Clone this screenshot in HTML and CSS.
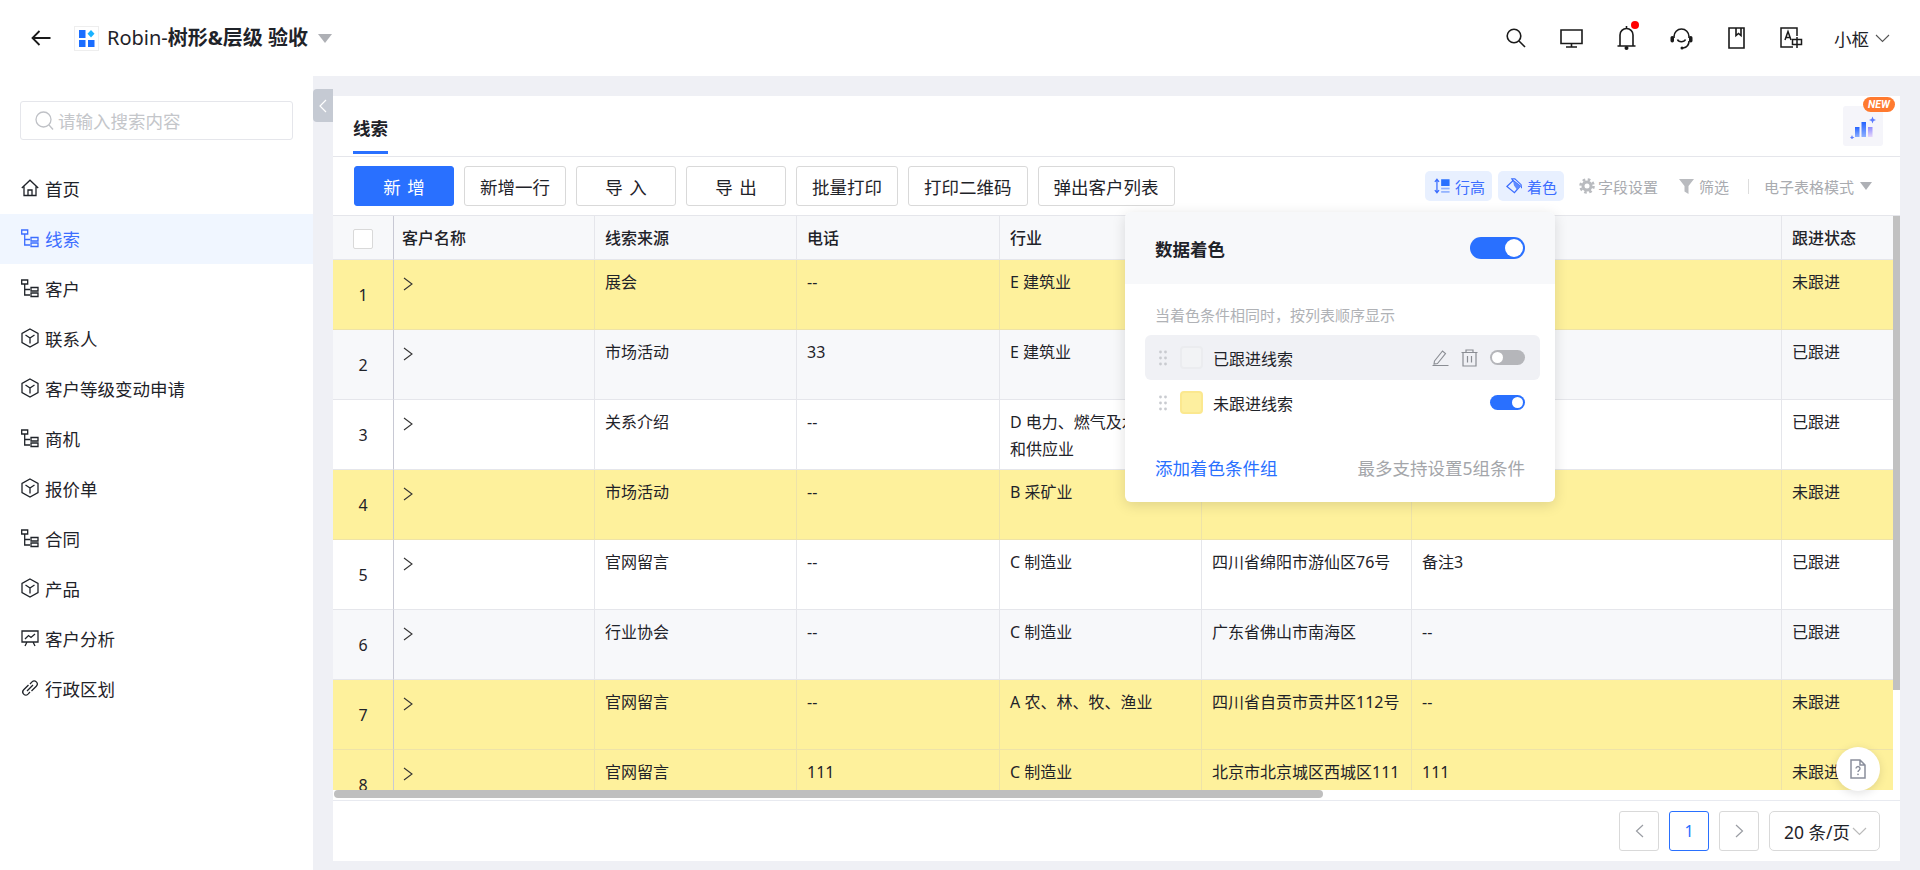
FILE: index.html
```html
<!DOCTYPE html>
<html lang="zh-CN">
<head>
    <meta charset="UTF-8">
    <title>线索</title>
    <link rel="stylesheet" href="styles.css">
</head>
<body>
    <svg class="sprites" width="0" height="0">
        <symbol id="i-tree" viewBox="0 0 18 18">
            <path d="M0.700 1h6v4H0.700zM3.700 5V16H9M3.700 10.500H9M10 8.500h7v3.500h-7zM10 14h7v3.500h-7z" fill="none" stroke="currentColor" stroke-width="1.300"/>
        </symbol>
        <symbol id="i-cube" viewBox="0 0 18 20">
            <path d="M9 1l8 4.500v9L9 19l-8-4.500v-9zM4.500 7L9 10l4.500-3M9 10v5.500" fill="none" stroke="currentColor" stroke-width="1.300"/>
        </symbol>
        <symbol id="i-chev" viewBox="0 0 10 14">
            <path d="M1 1l8 6-8 6" fill="none" stroke="currentColor" stroke-width="1.100"/>
        </symbol>
        <symbol id="i-dots" viewBox="0 0 8 16">
            <circle cx="1.500" cy="2" r="1.400"/><circle cx="6.500" cy="2" r="1.400"/>
            <circle cx="1.500" cy="8" r="1.400"/><circle cx="6.500" cy="8" r="1.400"/>
            <circle cx="1.500" cy="14" r="1.400"/><circle cx="6.500" cy="14" r="1.400"/>
        </symbol>
    </svg>

    <header class="topbar">
        <svg class="back" width="20" height="16" viewBox="0 0 20 16"><path d="M19.500 8H1.500M8.500 1L1.500 8l7 7" fill="none" stroke="#1a1a1a" stroke-width="1.800"/></svg>
        <span class="app-logo">
            <svg width="17" height="17" viewBox="0 0 17 17">
                <rect x="0" y="0" width="6.500" height="8" fill="#1a6dff"/>
                <path d="M12 0l3.500 3.800L12 7.600 8.500 3.800z" fill="#1ab2ff"/>
                <rect x="0" y="10" width="6.500" height="7" fill="#1a6dff"/>
                <rect x="9" y="10" width="6.500" height="7" fill="#1a6dff"/>
            </svg>
        </span>
        <span class="app-title">Robin-<b>树形&amp;层级 验收</b></span>
        <span class="caret caret-lg"></span>

        <div class="top-actions">
            <svg width="20" height="20" viewBox="0 0 20 20"><circle cx="8" cy="8" r="6.800" fill="none" stroke="#1a1a1a" stroke-width="1.600"/><path d="M13 13l6 6" stroke="#1a1a1a" stroke-width="1.600"/></svg>
            <svg width="23" height="19" viewBox="0 0 23 19"><path d="M1 1h21v13.500H1zM11.500 14.500V18M6 18h11" fill="none" stroke="#1a1a1a" stroke-width="1.600"/></svg>
            <svg class="bell" width="23" height="30" viewBox="0 0 23 30">
                <path d="M3 25V14a6.500 6.500 0 0 1 13 0v11M0.500 25h18M9.500 5v2.500" fill="none" stroke="#1a1a1a" stroke-width="1.600"/>
                <circle cx="9.500" cy="27" r="2" fill="#1a1a1a"/>
                <circle cx="18" cy="4" r="4" fill="#f00"/>
            </svg>
            <svg width="23" height="23" viewBox="0 0 23 23">
                <path d="M4 11V9.500a7.500 7.500 0 0 1 15 0V11M19 14c0 4-2.500 6.500-6 7M7.500 12.500c1 3 6.500 3 8 0" fill="none" stroke="#1a1a1a" stroke-width="1.600"/>
                <rect x="0.500" y="9" width="3.500" height="6.500" rx="1.700" fill="#1a1a1a"/>
                <rect x="19" y="9" width="3.500" height="6.500" rx="1.700" fill="#1a1a1a"/>
                <circle cx="12" cy="21" r="1.500" fill="#1a1a1a"/>
            </svg>
            <svg class="book" width="17" height="22" viewBox="0 0 17 22"><path d="M1 1h15v20H1zM8 1v7.500l2.500-2 2.500 2V1" fill="none" stroke="#1a1a1a" stroke-width="1.600"/></svg>
            <svg width="23" height="22" viewBox="0 0 23 22">
                <path d="M13 20H1V1h16v8M5 13L8 4.500 11 13M6 10.500h4M12.500 12.500h9v5h-9zM17 10v11" fill="none" stroke="#1a1a1a" stroke-width="1.500"/>
            </svg>
            <div class="user">小枢
                <svg width="15" height="9" viewBox="0 0 15 9"><path d="M1 1l6.500 6.500L14 1" fill="none" stroke="#555" stroke-width="1.100"/></svg>
            </div>
        </div>
    </header>

    <div class="layout">
        <aside class="sidebar">
            <div class="search">
                <svg width="19" height="20" viewBox="0 0 19 20"><circle cx="8.500" cy="8.500" r="7.500" fill="none" stroke="#bfc1c6" stroke-width="1.300"/><path d="M14 14l4 4.500" stroke="#bfc1c6" stroke-width="1.300"/></svg>
                <span>请输入搜索内容</span>
            </div>
            <nav class="menu">
                <a class="menu-item">
                    <svg class="menu-icon" viewBox="0 0 18 18"><path d="M0.800 9L9 1.200 17.200 9M3 7.500V16.500h12V7.500M7 16.500v-5.500h4v5.500" fill="none" stroke="currentColor" stroke-width="1.300"/></svg>首页
                </a>
                <a class="menu-item active"><svg class="menu-icon"><use href="#i-tree"/></svg>线索</a>
                <a class="menu-item"><svg class="menu-icon"><use href="#i-tree"/></svg>客户</a>
                <a class="menu-item"><svg class="menu-icon"><use href="#i-cube"/></svg>联系人</a>
                <a class="menu-item"><svg class="menu-icon"><use href="#i-cube"/></svg>客户等级变动申请</a>
                <a class="menu-item"><svg class="menu-icon"><use href="#i-tree"/></svg>商机</a>
                <a class="menu-item"><svg class="menu-icon"><use href="#i-cube"/></svg>报价单</a>
                <a class="menu-item"><svg class="menu-icon"><use href="#i-tree"/></svg>合同</a>
                <a class="menu-item"><svg class="menu-icon"><use href="#i-cube"/></svg>产品</a>
                <a class="menu-item">
                    <svg class="menu-icon" viewBox="0 0 18 18"><path d="M1 2h16v11H1zM0.500 2h17M4 10l3.500-3.500 2.500 2L14 5M6 13l-2 4M12 13l2 4" fill="none" stroke="currentColor" stroke-width="1.300"/></svg>客户分析
                </a>
                <a class="menu-item">
                    <svg class="menu-icon" viewBox="0 0 18 18"><path d="M7.500 6l-4.800 4.800a3 3 0 0 0 4.300 4.300L9 13M10.500 12l4.800-4.800A3 3 0 0 0 11 2.900L9 5M6 12l6-6" fill="none" stroke="currentColor" stroke-width="1.300"/></svg>行政区划
                </a>
            </nav>
        </aside>

        <main class="content">
            <div class="collapse-handle">
                <svg width="8" height="14" viewBox="0 0 8 14"><path d="M7 1L1 7l6 6" fill="none" stroke="#fff" stroke-width="1.200"/></svg>
            </div>
            <section class="panel">
                <div class="tabs">
                    <span class="tab">线索</span>
                    <div class="insight">
                        <svg width="26" height="26" viewBox="0 0 26 26">
                            <defs><linearGradient id="bar" x1="0" y1="0" x2="0" y2="1"><stop offset="0" stop-color="#2563ff"/><stop offset="1" stop-color="#8fb0ff"/></linearGradient>
                            <linearGradient id="bar2" x1="0" y1="0" x2="0" y2="1"><stop offset="0" stop-color="#8e8cff"/><stop offset="1" stop-color="#e6d6fb"/></linearGradient></defs>
                            <rect x="5" y="14" width="4.500" height="10" fill="url(#bar)"/>
                            <rect x="11.500" y="9" width="4.500" height="15" fill="url(#bar)"/>
                            <rect x="18" y="14" width="4.500" height="10" fill="url(#bar2)"/>
                            <path d="M22.500 3.500l1 2.500 2.500 1-2.500 1-1 2.500-1-2.500-2.500-1 2.500-1zM2 22l.7 1.800 1.800.7-1.800.7L2 27l-.7-1.800-1.300-.7 1.300-.7z" fill="#5b7cff"/>
                        </svg>
                        <span class="new-badge">NEW</span>
                    </div>
                </div>

                <div class="toolbar">
                    <button class="btn btn-primary">新 增</button>
                    <button class="btn">新增一行</button>
                    <button class="btn">导 入</button>
                    <button class="btn">导 出</button>
                    <button class="btn">批量打印</button>
                    <button class="btn">打印二维码</button>
                    <button class="btn">弹出客户列表</button>

                    <div class="table-tools">
                        <span class="chip">
                            <svg width="16" height="16" viewBox="0 0 19 18"><path d="M3.500 2v14M1 4l2.500-3L6 4M1 14l2.500 3L6 14" fill="none" stroke="#3b6dff" stroke-width="1.500"/><rect x="8.500" y="1" width="10" height="8" fill="#2970ff"/><rect x="8.500" y="11" width="10" height="2" fill="#8fb0ff"/><rect x="8.500" y="15" width="10" height="2" fill="#8fb0ff"/></svg>
                            行高
                        </span>
                        <span class="chip chip-color">
                            <svg width="16" height="16" viewBox="0 0 18 18"><path d="M1 9.500L8 3l8 6-6.500 7.500z" fill="none" stroke="#3b6dff" stroke-width="1.400"/><path d="M8 3l8 6-3.500 4.200L9 8.500z" fill="#5f8bff"/><path d="M8 3.500L6.500 1h3.500l7 6.500 .5 4" fill="none" stroke="#3b6dff" stroke-width="1.200"/></svg>
                            着色
                        </span>
                        <span class="tool tool-field">
                            <svg width="16" height="16" viewBox="0 0 16 16"><circle cx="8" cy="8" r="5.500" fill="#b9bbbf"/><circle cx="8" cy="8" r="6.500" fill="none" stroke="#b9bbbf" stroke-width="2.600" stroke-dasharray="2.600 2.500"/><circle cx="8" cy="8" r="2.500" fill="#fff"/></svg>
                            字段设置
                        </span>
                        <span class="tool tool-filter">
                            <svg width="15" height="15" viewBox="0 0 15 15"><path d="M0 0h15L9.500 7v8l-4-2.500V7z" fill="#b9bbbf"/></svg>
                            筛选
                        </span>
                        <span class="tool-sep"></span>
                        <span class="tool">电子表格模式<span class="caret caret-sm"></span></span>
                    </div>
                </div>

                <div class="table-area">
                    <div class="table-clip">
                        <table class="grid">
                            <colgroup>
                                <col class="c-idx"><col class="c-name"><col class="c-src"><col class="c-tel">
                                <col class="c-ind"><col class="c-addr"><col class="c-note"><col class="c-state">
                            </colgroup>
                            <thead>
                                <tr>
                                    <th class="idx"><span class="check"></span></th>
                                    <th>客户名称</th><th>线索来源</th><th>电话</th><th>行业</th><th>地址</th><th>备注</th><th>跟进状态</th>
                                </tr>
                            </thead>
                            <tbody>
                                <tr class="yellow">
                                    <td class="idx">1</td><td class="name"><svg class="chev"><use href="#i-chev"/></svg></td>
                                    <td>展会</td><td>--</td><td>E 建筑业</td><td></td><td></td><td>未跟进</td>
                                </tr>
                                <tr class="stripe">
                                    <td class="idx">2</td><td class="name"><svg class="chev"><use href="#i-chev"/></svg></td>
                                    <td>市场活动</td><td>33</td><td>E 建筑业</td><td></td><td></td><td>已跟进</td>
                                </tr>
                                <tr>
                                    <td class="idx">3</td><td class="name"><svg class="chev"><use href="#i-chev"/></svg></td>
                                    <td>关系介绍</td><td>--</td><td>D 电力、燃气及水生产<br>和供应业</td><td></td><td></td><td>已跟进</td>
                                </tr>
                                <tr class="yellow">
                                    <td class="idx">4</td><td class="name"><svg class="chev"><use href="#i-chev"/></svg></td>
                                    <td>市场活动</td><td>--</td><td>B 采矿业</td><td></td><td></td><td>未跟进</td>
                                </tr>
                                <tr>
                                    <td class="idx">5</td><td class="name"><svg class="chev"><use href="#i-chev"/></svg></td>
                                    <td>官网留言</td><td>--</td><td>C 制造业</td><td>四川省绵阳市游仙区76号</td><td>备注3</td><td>已跟进</td>
                                </tr>
                                <tr class="stripe">
                                    <td class="idx">6</td><td class="name"><svg class="chev"><use href="#i-chev"/></svg></td>
                                    <td>行业协会</td><td>--</td><td>C 制造业</td><td>广东省佛山市南海区</td><td>--</td><td>已跟进</td>
                                </tr>
                                <tr class="yellow">
                                    <td class="idx">7</td><td class="name"><svg class="chev"><use href="#i-chev"/></svg></td>
                                    <td>官网留言</td><td>--</td><td>A 农、林、牧、渔业</td><td>四川省自贡市贡井区112号</td><td>--</td><td>未跟进</td>
                                </tr>
                                <tr class="yellow">
                                    <td class="idx">8</td><td class="name"><svg class="chev"><use href="#i-chev"/></svg></td>
                                    <td>官网留言</td><td>111</td><td>C 制造业</td><td>北京市北京城区西城区111</td><td>111</td><td>未跟进</td>
                                </tr>
                            </tbody>
                        </table>
                    </div>
                    <div class="scroll-y"></div>
                    <div class="scroll-x"></div>

                    <div class="help-btn">
                        <svg width="16" height="20" viewBox="0 0 16 20"><path d="M1 1h9l5 5v13H1zM10 1v5h5" fill="none" stroke="#8a8f9c" stroke-width="1.500"/><path d="M6 9.500a2 2 0 1 1 3 1.800c-.8.500-1 .9-1 1.700" fill="none" stroke="#8a8f9c" stroke-width="1.400"/><circle cx="8" cy="15.300" r=".9" fill="#8a8f9c"/></svg>
                    </div>
                </div>

                <div class="pager">
                    <span class="page-btn"><svg width="9" height="14" viewBox="0 0 9 14"><path d="M8 1L1.500 7 8 13" fill="none" stroke="#9a9da3" stroke-width="1.200"/></svg></span>
                    <span class="page-btn current">1</span>
                    <span class="page-btn"><svg width="9" height="14" viewBox="0 0 9 14"><path d="M1 1l6.500 6L1 13" fill="none" stroke="#9a9da3" stroke-width="1.200"/></svg></span>
                    <span class="page-size">20 条/页
                        <svg width="15" height="9" viewBox="0 0 15 9"><path d="M1 1l6.500 6.500L14 1" fill="none" stroke="#bbb" stroke-width="1.200"/></svg>
                    </span>
                </div>

                <div class="color-pop">
                    <div class="pop-head">
                        <span>数据着色</span>
                        <span class="switch switch-lg on"></span>
                    </div>
                    <p class="pop-hint">当着色条件相同时，按列表顺序显示</p>
                    <div class="rule hover">
                        <svg class="drag"><use href="#i-dots"/></svg>
                        <span class="swatch"></span>
                        <span class="rule-name">已跟进线索</span>
                        <svg class="rule-edit" width="17" height="17" viewBox="0 0 17 17"><path d="M2.500 12l8-10 3 2.500-8 10-3.500 .5zM0.500 16.500h16" fill="none" stroke="#8a8d93" stroke-width="1.100"/></svg>
                        <svg class="rule-del" width="17" height="18" viewBox="0 0 17 18"><path d="M0.500 3.500h16M5 3.500V1h7v2.500M2 3.500V17h13V3.500M6.500 7v6.500M10.500 7v6.500" fill="none" stroke="#8a8d93" stroke-width="1.200"/></svg>
                        <span class="switch"></span>
                    </div>
                    <div class="rule">
                        <svg class="drag"><use href="#i-dots"/></svg>
                        <span class="swatch swatch-yellow"></span>
                        <span class="rule-name">未跟进线索</span>
                        <span class="switch on"></span>
                    </div>
                    <div class="pop-foot">
                        <a class="add-rule">添加着色条件组</a>
                        <span>最多支持设置5组条件</span>
                    </div>
                </div>
            </section>
        </main>
    </div>
</body>
</html>
```

FILE: styles.css
```css
* {
    box-sizing: border-box;
}
html, body {
    height: 100%;
}
body {
    margin: 0;
    height: 870px;
    overflow: hidden;
    display: flex;
    flex-direction: column;
    font-family: "Noto Sans", "Noto Sans CJK SC", sans-serif;
    color: #1f2329;
    background-color: #eff0f5;
}
.sprites {
    position: absolute;
}

/* top bar */
.topbar {
    height: 76px;
    flex: none;
    display: flex;
    align-items: center;
    background-color: white;
    padding: 0 30px 0 31px;
}
.back {
    margin-right: 23px;
}
.app-logo {
    width: 25px;
    height: 25px;
    display: flex;
    align-items: center;
    justify-content: center;
    border: 1px solid #eeeeee;
    margin-right: 8px;
    padding-left: 1px;
}
.app-title {
    font-size: 20px;
    line-height: 28px;
    white-space: nowrap;
}
.app-title b {
    font-weight: 700;
}
.caret {
    display: inline-block;
    width: 0;
    height: 0;
    border-style: solid;
    border-color: #aeb0b5 transparent transparent transparent;
}
.caret-lg {
    border-width: 9px 7.5px 0 7.5px;
    margin-left: 10px;
}
.caret-sm {
    border-width: 8px 6px 0 6px;
    vertical-align: 4px;
}
.top-actions {
    margin-left: auto;
    display: flex;
    align-items: center;
    gap: 34px;
}
.bell {
    margin-top: -5px;
    margin-right: -4px;
}
.book {
    margin: 0 1px;
}
.user {
    display: flex;
    align-items: center;
    gap: 6px;
    font-size: 17.5px;
    margin-left: -3px;
}

/* sidebar */
.layout {
    flex: 1;
    min-height: 0;
    display: flex;
}
.sidebar {
    width: 313px;
    flex: none;
    background-color: white;
    padding-top: 25px;
}
.search {
    height: 39px;
    margin: 0 20px;
    border: 1px solid #e5e6eb;
    border-radius: 3px;
    display: flex;
    align-items: center;
    gap: 4px;
    padding-left: 14px;
    font-size: 17.5px;
    color: #c4c6ca;
}
.menu {
    margin-top: 24px;
}
.menu-item {
    height: 50px;
    display: flex;
    align-items: center;
    gap: 6px;
    padding: 0 0 2px 21px;
    font-size: 17.500px;
    color: #1f2329;
}
.menu-item.active {
    background-color: #f0f6ff;
    color: #3b6dff;
}
.menu-icon {
    width: 18px;
    height: 20px;
}

/* main panel */
.content {
    flex: 1;
    min-width: 0;
    position: relative;
    padding: 20px 20px 9px 20px;
}
.collapse-handle {
    position: absolute;
    left: 0;
    top: 13px;
    width: 20px;
    height: 33px;
    background-color: #c5cad3;
    border-radius: 4px 0 0 4px;
    display: flex;
    align-items: center;
    justify-content: center;
}
.panel {
    height: 100%;
    position: relative;
    background-color: white;
    display: flex;
    flex-direction: column;
}
.tabs {
    height: 61px;
    flex: none;
    display: flex;
    justify-content: space-between;
    padding: 0 17px 0 20px;
    border-bottom: 1px solid #e5e6eb;
}
.tab {
    height: 58px;
    padding-top: 18px;
    font-size: 17.5px;
    line-height: 28px;
    font-weight: 700;
    border-bottom: 3px solid #2970ff;
}
.insight {
    position: relative;
    width: 40px;
    height: 40px;
    margin-top: 10px;
    background-color: #f5f5fa;
    border-radius: 3px;
    display: flex;
    align-items: center;
    justify-content: center;
}
.new-badge {
    position: absolute;
    left: 20px;
    top: -9px;
    width: 32px;
    height: 15px;
    border-radius: 8px;
    background-color: #ff7a2f;
    color: white;
    font-family: Roboto, sans-serif;
    font-size: 10.5px;
    font-weight: 700;
    font-style: italic;
    line-height: 15px;
    text-align: center;
}
.toolbar {
    height: 59px;
    flex: none;
    display: flex;
    align-items: center;
    gap: 10px;
    padding-left: 21px;
    border-bottom: 1px solid #e5e6eb;
}
.btn {
    height: 40px;
    min-width: 100px;
    padding: 0 15px;
    background-color: white;
    border: 1px solid #d9d9d9;
    border-radius: 3px;
    font-family: inherit;
    font-size: 17.5px;
    word-spacing: 2px;
    color: #1f2329;
}
.btn-primary {
    background-color: #2970ff;
    border-color: #2970ff;
    color: white;
}
.table-tools {
    margin-left: auto;
    display: flex;
    align-items: center;
    padding-right: 28px;
    font-size: 15px;
    color: #a9abb0;
}
.chip {
    height: 30px;
    display: flex;
    align-items: center;
    gap: 5px;
    padding: 0 7px 0 9px;
    background-color: #e8f0ff;
    border-radius: 5px;
    color: #3b6dff;
    margin-right: 6px;
}
.chip-color {
    padding: 0 7px 0 8px;
    margin-right: 15px;
}
.tool {
    display: flex;
    align-items: center;
    gap: 6px;
    white-space: nowrap;
}
.tool-field {
    gap: 3px;
    margin-right: 21px;
}
.tool-filter {
    gap: 5px;
}
.tool-sep {
    width: 1px;
    height: 15px;
    background-color: #dddddd;
    margin: 0 15px 0 19px;
}

/* table */
.table-area {
    flex: 1;
    min-height: 0;
    position: relative;
    padding-bottom: 10px;
}
.table-clip {
    height: 100%;
    margin-right: 7px;
    overflow: hidden;
}
.grid {
    width: 1560px;
    table-layout: fixed;
    border-collapse: separate;
    border-spacing: 0;
    font-size: 16px;
}
.c-idx { width: 61px; }
.c-name { width: 201px; }
.c-src { width: 202px; }
.c-tel { width: 203px; }
.c-ind { width: 202px; }
.c-addr { width: 210px; }
.c-note { width: 370px; }
.c-state { width: 111px; }
.grid th {
    height: 44px;
    padding: 0 10px 1px 10px;
    text-align: left;
    font-weight: 500;
    background-color: #f7f8fa;
    border-right: 1px solid #e5e6eb;
    border-bottom: 1px solid #e5e6eb;
}
.grid td {
    height: 70px;
    padding: 9px 10px 0 10px;
    vertical-align: top;
    line-height: 27px;
    border-right: 1px solid #e5e6eb;
    border-bottom: 1px solid #e5e6eb;
}
.grid th:last-child,
.grid td:last-child {
    border-right: none;
}
.grid .idx {
    padding: 1px 0 0 0;
    text-align: center;
    vertical-align: middle;
    border-right-color: #c8c9d4;
}
.grid th.idx {
    padding: 0;
}
.grid th:nth-child(2),
.grid td.name {
    padding-left: 8px;
}
.check {
    display: inline-block;
    width: 20px;
    height: 20px;
    background-color: white;
    border: 1px solid #d9d9d9;
    border-radius: 2px;
    vertical-align: middle;
}
.chev {
    display: block;
    width: 10px;
    height: 14px;
    margin: 8px 0 0 1px;
    color: #333;
}
.stripe td {
    background-color: #f7f8fa;
}
.yellow td {
    background-color: #fef19c;
    border-right-color: #eee3a8;
    border-bottom-color: #eee3a8;
}
.scroll-y {
    position: absolute;
    right: 0;
    top: 0;
    width: 7px;
    height: 474px;
    background-color: #c1c1c1;
}
.scroll-x {
    position: absolute;
    left: 1px;
    top: 574px;
    width: 989px;
    height: 8px;
    border-radius: 4px;
    background-color: #bfbfbf;
}
.help-btn {
    position: absolute;
    left: 1503px;
    top: 531px;
    width: 44px;
    height: 44px;
    border-radius: 50%;
    background-color: white;
    box-shadow: 0 2px 10px rgba(0, 0, 0, 0.12);
    display: flex;
    align-items: center;
    justify-content: center;
}

/* pagination */
.pager {
    height: 61px;
    flex: none;
    display: flex;
    align-items: center;
    justify-content: flex-end;
    gap: 10px;
    padding-right: 20px;
    border-top: 1px solid #e8eaf0;
}
.page-btn {
    width: 40px;
    height: 40px;
    border: 1px solid #d9d9d9;
    border-radius: 3px;
    display: flex;
    align-items: center;
    justify-content: center;
    font-size: 16px;
}
.page-btn.current {
    border-color: #2970ff;
    color: #2970ff;
}
.page-size {
    width: 111px;
    height: 40px;
    border: 1px solid #d9d9d9;
    border-radius: 5px;
    display: flex;
    align-items: center;
    gap: 2px;
    padding-left: 14px;
    font-size: 17.5px;
    white-space: nowrap;
}

/* colouring popover */
.color-pop {
    position: absolute;
    left: 792px;
    top: 116px;
    width: 430px;
    height: 290px;
    background-color: white;
    border-radius: 6px;
    box-shadow: 0 3px 14px rgba(0, 0, 0, 0.13);
    overflow: hidden;
}
.pop-head {
    height: 72px;
    display: flex;
    align-items: center;
    justify-content: space-between;
    padding: 0 30px;
    background-color: #f7f8fa;
    font-size: 17.5px;
    font-weight: 700;
}
.pop-hint {
    margin: 20px 0 9px 30px;
    font-size: 15px;
    line-height: 22px;
    color: #b0b2b6;
}
.rule {
    height: 45px;
    margin: 0 15px 0 20px;
    padding: 0 15px 0 14px;
    display: flex;
    align-items: center;
    border-radius: 6px;
    font-size: 16px;
}
.rule.hover {
    background-color: #f0f1f5;
}
.drag {
    width: 8px;
    height: 16px;
    fill: #c9cbd0;
    flex: none;
}
.swatch {
    width: 23px;
    height: 23px;
    margin: 0 10px 0 13px;
    border-radius: 4px;
    background-color: #f2f3f5;
    border: 2px solid #ebecef;
}
.swatch-yellow {
    background-color: #fdef9f;
    border-color: #fbe88f;
}
.rule-edit {
    margin-left: auto;
}
.rule-del {
    margin: 0 12px;
}
.switch {
    position: relative;
    width: 35px;
    height: 15px;
    border-radius: 8px;
    background-color: #b5b6ba;
}
.switch::after {
    content: "";
    position: absolute;
    left: 2px;
    top: 2px;
    width: 11px;
    height: 11px;
    border-radius: 50%;
    background-color: white;
}
.switch.on {
    background-color: #2970ff;
    margin-left: auto;
}
.switch.on::after {
    left: auto;
    right: 2px;
}
.switch-lg {
    width: 55px;
    height: 22px;
    border-radius: 11px;
}
.switch-lg::after {
    width: 18px;
    height: 18px;
}
.pop-foot {
    display: flex;
    align-items: center;
    justify-content: space-between;
    padding: 31px 30px 0 30px;
    font-size: 17.5px;
    line-height: 24px;
    color: #a4a6aa;
}
.add-rule {
    color: #2970ff;
}
```
